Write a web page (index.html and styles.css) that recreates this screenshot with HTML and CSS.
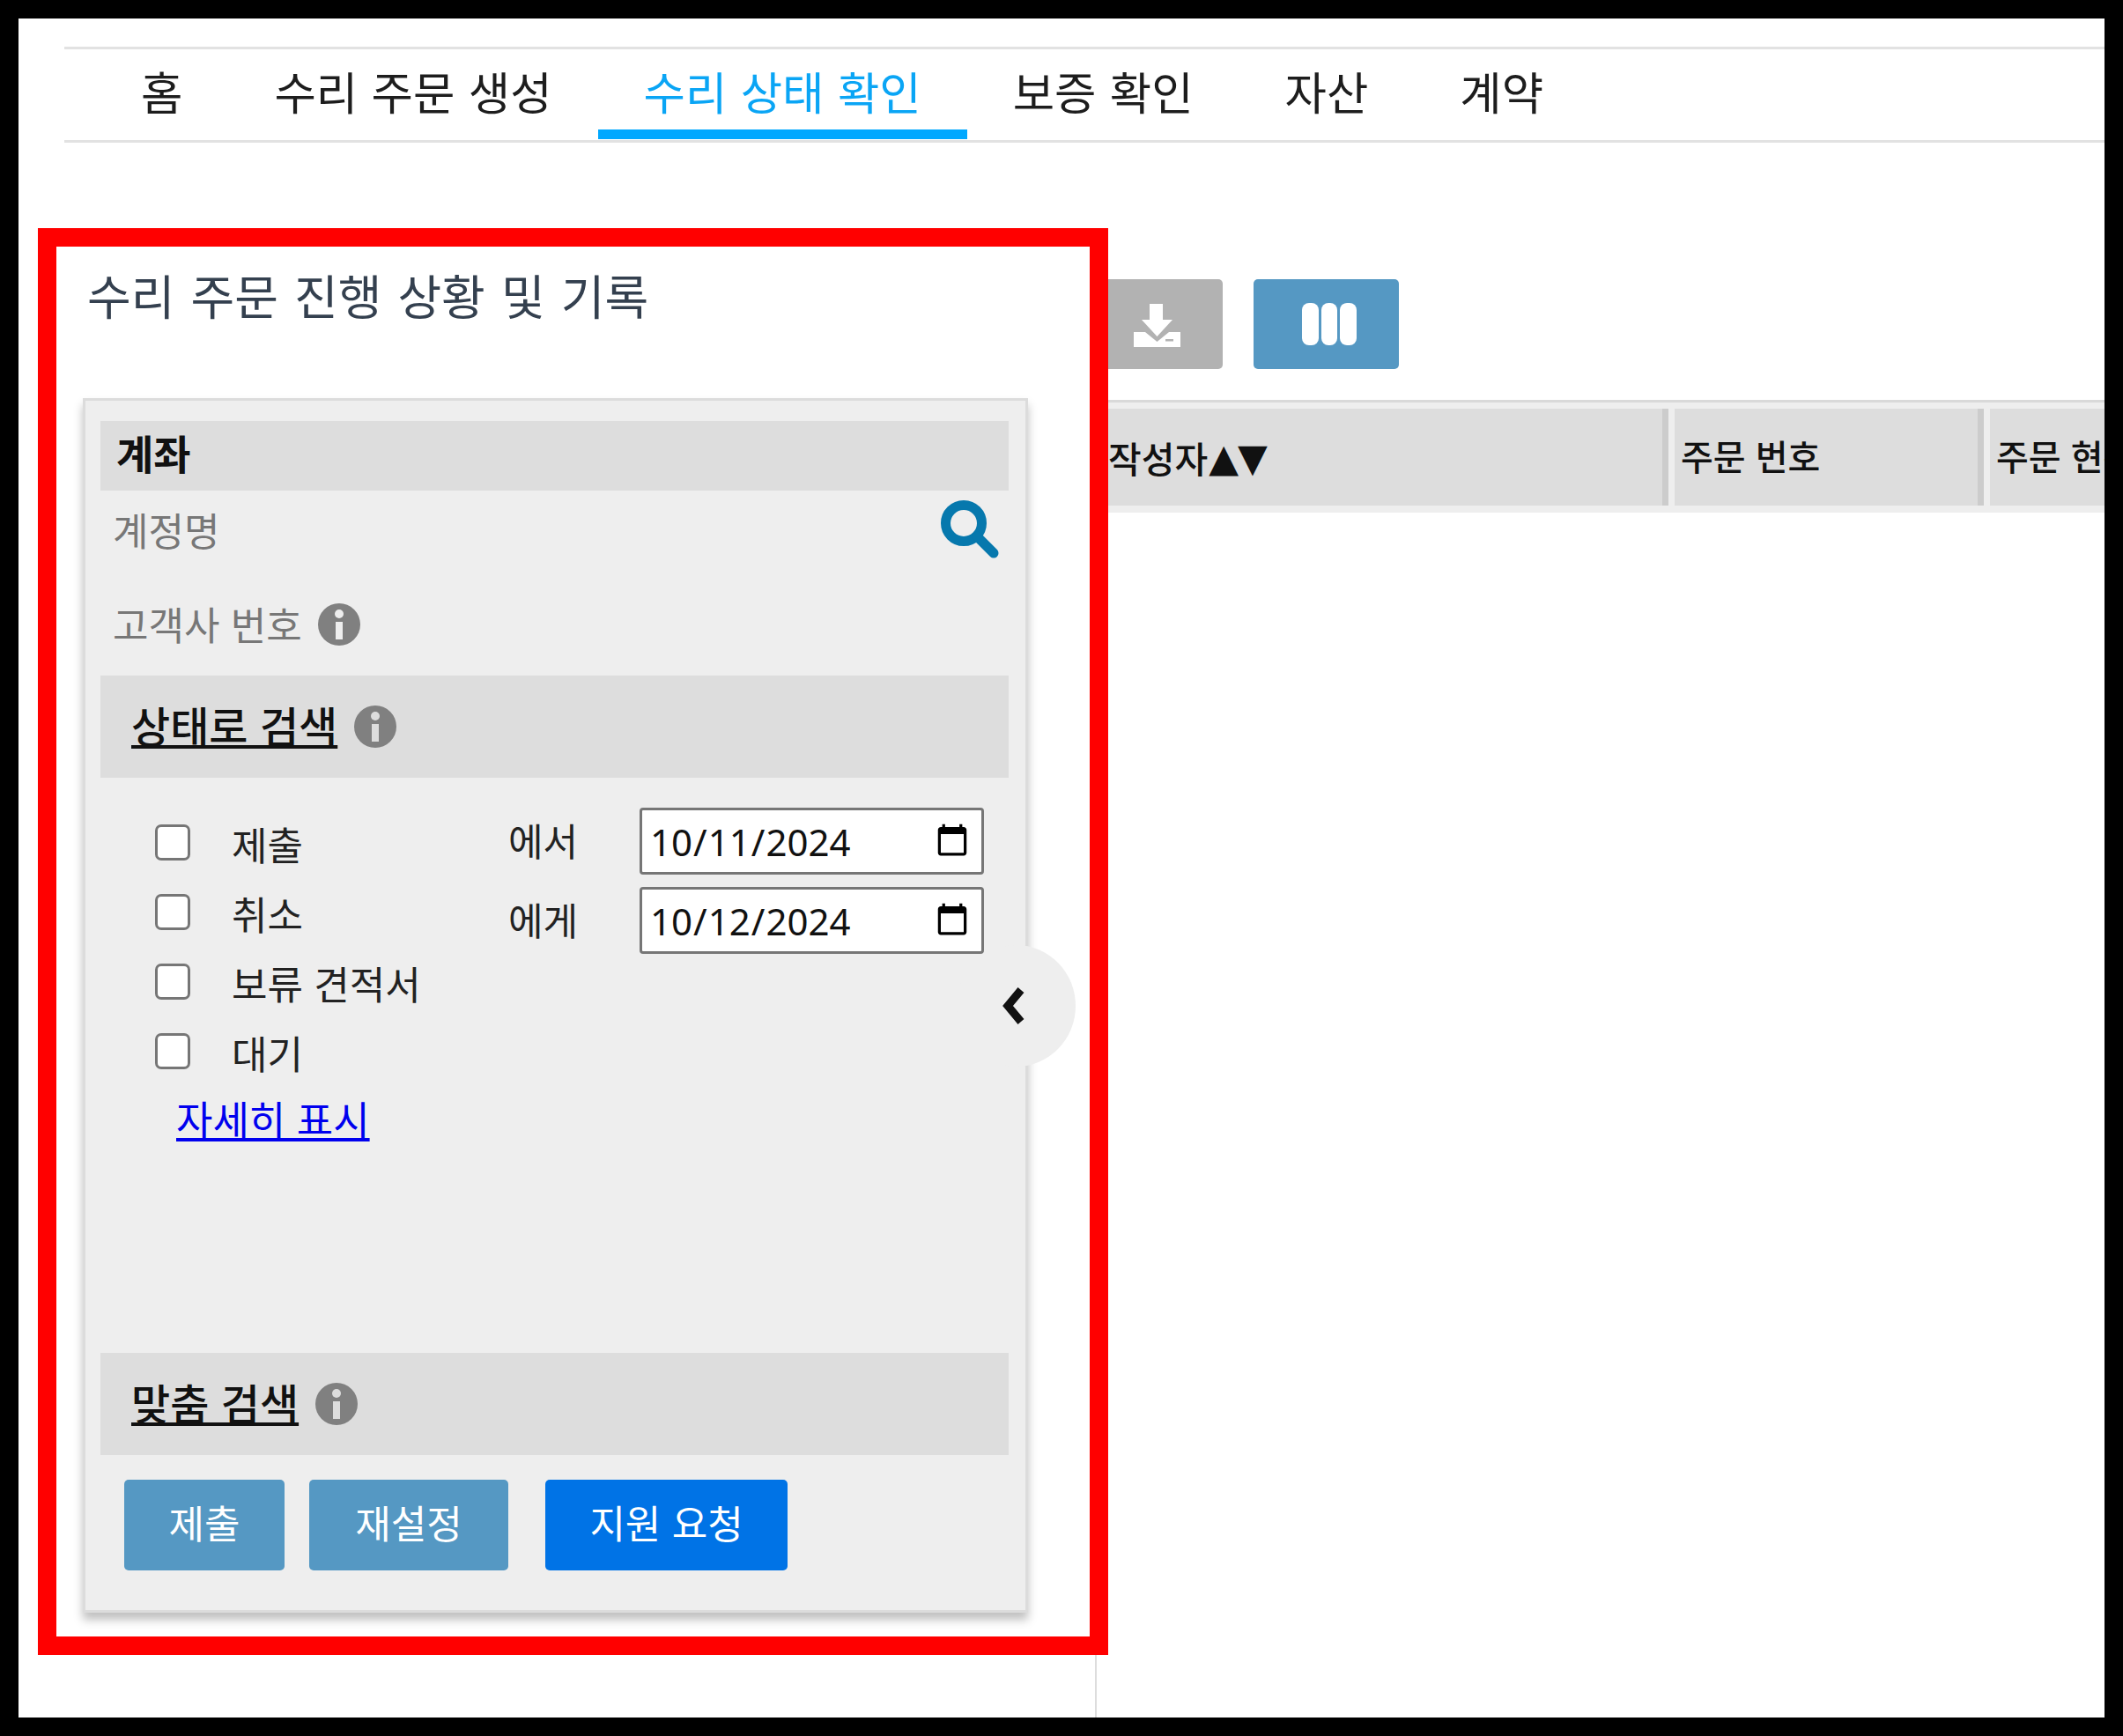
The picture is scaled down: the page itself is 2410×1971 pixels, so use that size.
FILE: index.html
```html
<!DOCTYPE html>
<html lang="ko">
<head>
<meta charset="utf-8">
<title>수리 상태 확인</title>
<link rel="stylesheet" href="styles.css">
</head>
<body>
<div class="frame">
  <nav class="tabs">
    <a class="tab">홈</a>
    <a class="tab">수리 주문 생성</a>
    <a class="tab active">수리 상태 확인</a>
    <a class="tab">보증 확인</a>
    <a class="tab">자산</a>
    <a class="tab">계약</a>
  </nav>
  <main class="main">
    <div class="left">
      <section class="redbox">
        <h1 class="title">수리 주문 진행 상황 및 기록</h1>
        <div class="panel">
          <div class="head head-account">계좌</div>
          <div class="field field-name">
            <span>계정명</span>
            <svg class="search" viewBox="0 0 66 66"><circle cx="26" cy="26" r="20.5" fill="none" stroke="#0678ad" stroke-width="11"/><path d="M41 41 60 60" stroke="#0678ad" stroke-width="11" stroke-linecap="round"/></svg>
          </div>
          <div class="field field-number">
            <span>고객사 번호</span>
            <svg class="info" viewBox="0 0 48 48"><circle cx="24" cy="24" r="24" fill="#808080"/><circle cx="24" cy="12" r="5" fill="#eee"/><rect x="20" y="21" width="8" height="20" fill="#eee"/></svg>
          </div>
          <div class="head head-sub"><u>상태로 검색</u>
            <svg class="info" viewBox="0 0 48 48"><circle cx="24" cy="24" r="24" fill="#808080"/><circle cx="24" cy="12" r="5" fill="#ddd"/><rect x="20" y="21" width="8" height="20" fill="#ddd"/></svg>
          </div>
          <div class="filters">
            <div class="statuses">
              <label class="check"><input type="checkbox"><span>제출</span></label>
              <label class="check"><input type="checkbox"><span>취소</span></label>
              <label class="check"><input type="checkbox"><span>보류 견적서</span></label>
              <label class="check"><input type="checkbox"><span>대기</span></label>
              <a class="more" href="#">자세히 표시</a>
            </div>
            <div class="dates">
              <span>에서</span><input class="date" type="date" value="2024-10-11">
              <span>에게</span><input class="date" type="date" value="2024-10-12">
            </div>
          </div>
          <div class="head head-sub head-custom"><u>맞춤 검색</u>
            <svg class="info" viewBox="0 0 48 48"><circle cx="24" cy="24" r="24" fill="#808080"/><circle cx="24" cy="12" r="5" fill="#ddd"/><rect x="20" y="21" width="8" height="20" fill="#ddd"/></svg>
          </div>
          <div class="actions">
            <button class="btn btn-submit">제출</button>
            <button class="btn btn-reset">재설정</button>
            <button class="btn btn-help">지원 요청</button>
          </div>
          <div class="collapse">
            <svg viewBox="0 0 28 42"><path d="M23 3 8 21l15 18" fill="none" stroke="#111" stroke-width="9"/></svg>
          </div>
        </div>
      </section>
      <div class="divider"></div>
    </div>
    <div class="right">
      <div class="toolbar">
        <button class="tool tool-download">
          <svg viewBox="0 0 53 49"><path d="M18 0h15v18h11L26.500 37 9 18h9z" fill="#fff"/><path d="M0 32h13l13.500 11L40 32h13v17H0z" fill="#fff"/><rect x="36" y="40" width="9" height="2.500" fill="#b2b2b2"/></svg>
        </button>
        <button class="tool tool-columns">
          <svg viewBox="0 0 62 48"><rect x="0" width="19" height="48" rx="8" fill="#fff"/><rect x="22" width="18" height="48" rx="8" fill="#fff"/><rect x="43" width="19" height="48" rx="8" fill="#fff"/></svg>
        </button>
      </div>
      <div class="thead">
        <div class="cell cell-author">작성자<span class="sort">▲▼</span></div>
        <div class="cell cell-order">주문 번호</div>
        <div class="cell cell-state">주문 현황</div>
      </div>
    </div>
  </main>
</div>
</body>
</html>
```
FILE: styles.css
```css
* { box-sizing: border-box; }
html, body { margin: 0; padding: 0; background: #000; }
body { font-family: "Noto Sans CJK KR", "Noto Sans", sans-serif; color: #222; }

.frame {
  width: 2410px;
  height: 1971px;
  border: 21px solid #000;
  border-radius: 14px;
  background: #fff;
  overflow: hidden;
  display: flex;
  flex-direction: column;
}

.tabs {
  display: flex;
  margin: 32px 0 0 52px;
  height: 109px;
  padding-left: 35px;
  border-top: 3px solid #e2e2e2;
  border-bottom: 3px solid #e2e2e2;
  flex: none;
}
.tab {
  padding: 0 52px;
  height: 102px;
  line-height: 93px;
  font-size: 51.5px;
  word-spacing: 1px;
  color: #1d1d1d;
  white-space: nowrap;
  border-bottom: 11px solid transparent;
}
.tab.active { color: #0aa5f5; border-bottom-color: #00a8ff; }

.main { flex: 1; display: flex; min-height: 0; }
.left { width: 1237px; flex: none; display: flex; flex-direction: column; }
.redbox {
  margin: 97px 0 0 22px;
  width: 1215px;
  height: 1620px;
  border: 21px solid #f00;
  background: #fff;
  display: flex;
  flex-direction: column;
  flex: none;
}
.divider { flex: 1; width: 1224px; border-right: 2px solid #ddd; }

.title {
  margin: 25px 0 0 35px;
  height: 60px;
  line-height: 60px;
  font-size: 54px;
  font-weight: 400;
  word-spacing: 3px;
  color: #34404f;
}

.panel {
  position: relative;
  margin: 87px 0 0 30px;
  width: 1073px;
  height: 1379px;
  padding: 23px 19px 0 17px;
  background: #eee;
  border: 3px solid #dcdcdc;
  box-shadow: 0 8px 10px rgba(0,0,0,.25);
  display: flex;
  flex-direction: column;
}

.head {
  background: #ddd;
  color: #111;
  font-weight: 500;
  flex: none;
  display: flex;
  align-items: center;
}
.head-account { height: 79px; padding: 0 0 10px 18px; font-size: 46px; font-weight: 700; }
.head-sub { height: 116px; padding-left: 35px; font-size: 48px; gap: 19px; }
.head-sub u { position: relative; top: -3px; }
.head-custom { margin-top: auto; }

.field {
  display: flex;
  align-items: center;
  padding: 0 11px 0 14px;
  font-size: 44px;
  color: #777;
  flex: none;
}
.field span { position: relative; top: -3px; }
.field-number span { top: -1px; }
.field-name { height: 93px; justify-content: space-between; }
.field-number { height: 117px; gap: 18px; }

.info { width: 48px; height: 48px; flex: none; }
.search { width: 66px; height: 66px; position: relative; top: -3px; }

.filters { display: flex; padding: 34px 0 0 62px; flex: none; }
.statuses { width: 401px; display: flex; flex-direction: column; align-items: flex-start; }
.check {
  display: flex;
  align-items: center;
  gap: 47px;
  height: 79px;
  font-size: 44px;
  color: #222;
  white-space: nowrap;
}
.check span { position: relative; top: 1px; }
.check input {
  appearance: none;
  margin: 0;
  width: 40px;
  height: 41px;
  background: #fff;
  border: 3px solid #767676;
  border-radius: 7px;
}
.more {
  margin: 2px 0 0 24px;
  font-size: 45px;
  line-height: 70px;
  color: #00e;
  white-space: nowrap;
}

.dates {
  display: grid;
  grid-template-columns: 149px 391px;
  grid-auto-rows: 76px;
  row-gap: 14px;
  align-items: center;
  font-size: 43px;
  color: #222;
}
.dates span { position: relative; top: -2px; }
.date {
  width: 391px;
  height: 76px;
  margin: 0;
  padding: 0 10px 0 8px;
  background: #fff;
  border: 3px solid #767676;
  border-radius: 4px;
  font-family: "Noto Sans", sans-serif;
  font-size: 42px;
  color: #111;
}

.actions { display: flex; margin: 28px 0 45px 27px; flex: none; }
.btn {
  height: 103px;
  padding: 0 0 8px;
  border: 0;
  border-radius: 5px;
  color: #fff;
  font: 400 44px "Noto Sans CJK KR", sans-serif;
}
.btn-submit { width: 182px; background: #5598c3; margin-right: 28px; }
.btn-reset { width: 226px; background: #5598c3; margin-right: 42px; }
.btn-help { width: 275px; background: #0073e6; }

.collapse {
  position: absolute;
  left: 989px;
  top: 618px;
  width: 135px;
  height: 138px;
  border-radius: 50%;
  background: #eee;
  display: flex;
  align-items: center;
  padding-left: 50px;
}
.collapse svg { width: 28px; height: 42px; }

.right { flex: 1; min-width: 0; overflow: hidden; }
.toolbar { display: flex; gap: 35px; margin-top: 155px; height: 102px; }
.tool {
  height: 102px;
  padding: 0;
  border: 0;
  border-radius: 0 5px 5px 0;
  display: flex;
  align-items: center;
}
.tool-download { width: 130px; background: #b2b2b2; padding: 2px 0 0 29px; }
.tool-download svg { width: 53px; height: 49px; }
.tool-columns { width: 165px; background: #5598c3; border-radius: 5px; padding: 0 0 0 55px; }
.tool-columns svg { width: 62px; height: 48px; }

.thead {
  display: flex;
  margin-top: 35px;
  padding: 7px 0 8px;
  background: #eee;
  border-top: 3px solid #d9d9d9;
}
.cell {
  height: 110px;
  background: #ddd;
  display: flex;
  align-items: center;
  font-size: 40px;
  font-weight: 500;
  color: #111;
  white-space: nowrap;
  flex: none;
  overflow: hidden;
  padding-bottom: 5px;
}
.cell-author { width: 636px; border-right: 7px solid #ccc; margin-right: 7px; padding-bottom: 0; font-size: 41px; }
.cell-order { width: 351px; padding-left: 7px; border-right: 7px solid #ccc; margin-right: 7px; }
.cell-state { flex: 1; min-width: 0; padding-left: 7px; }
.sort { font-family: "DejaVu Sans", sans-serif; font-size: 44px; letter-spacing: -1px; margin-left: 1px; }
```
